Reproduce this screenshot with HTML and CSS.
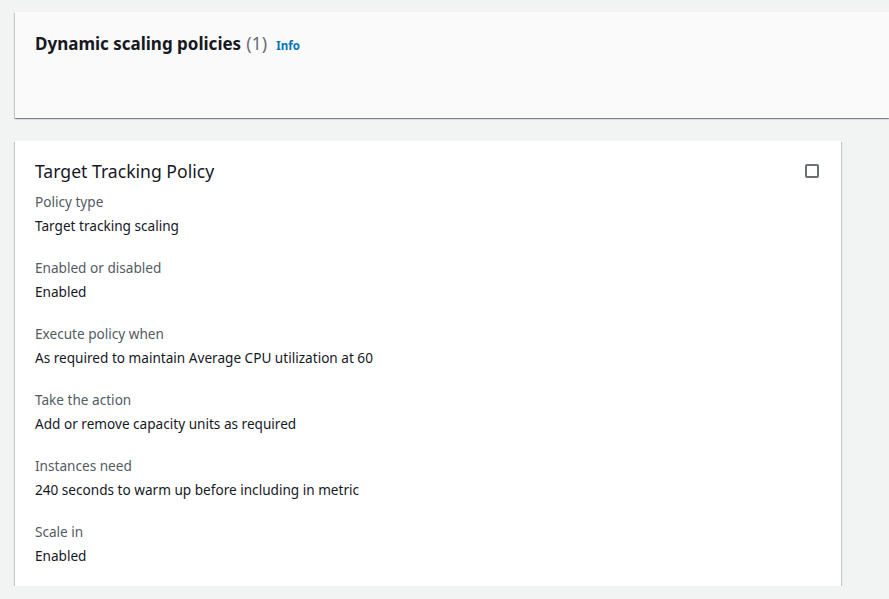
FILE: index.html
```html
<!DOCTYPE html>
<html>
<head>
<meta charset="utf-8">
<link rel="stylesheet" href="styles.css">
</head>
<body>
<div class="page">
  <section class="card card-top">
    <h2 class="heading">Dynamic scaling policies <span class="count">(1)</span> <a class="info" href="#">Info</a></h2>
  </section>
  <section class="card card-policy">
    <div class="policy-head">
      <h3 class="policy-title">Target Tracking Policy</h3>
      <span class="checkbox"></span>
    </div>
    <dl class="fields">
      <div class="field"><dt>Policy type</dt><dd>Target tracking scaling</dd></div>
      <div class="field"><dt>Enabled or disabled</dt><dd>Enabled</dd></div>
      <div class="field"><dt>Execute policy when</dt><dd>As required to maintain Average CPU utilization at 60</dd></div>
      <div class="field"><dt>Take the action</dt><dd>Add or remove capacity units as required</dd></div>
      <div class="field"><dt>Instances need</dt><dd>240 seconds to warm up before including in metric</dd></div>
      <div class="field"><dt>Scale in</dt><dd>Enabled</dd></div>
    </dl>
  </section>
</div>
</body>
</html>
```
FILE: styles.css
```css
html, body {
  margin: 0;
  padding: 0;
  background: #f2f3f3;
  font-family: "Noto Sans", "Open Sans", sans-serif;
  color: #16191f;
}
.page {
  padding: 12px 0 0 15px;
  display: flex;
  flex-direction: column;
  gap: 23px;
}
.card {
  box-shadow: 0 1px 1px 0 rgba(0,28,36,.3), 1px 1px 1px 0 rgba(0,28,36,.15), -1px 1px 1px 0 rgba(0,28,36,.15);
}
.card-top {
  background: #fafafa;
  height: 106px;
  box-sizing: border-box;
  padding: 20px 20px 0;
}
.heading {
  margin: 0;
  font-size: 17px;
  line-height: 22px;
  font-weight: 700;
  display: flex;
  align-items: baseline;
}
.count {
  font-size: 18px;
  font-weight: 400;
  color: #687078;
  margin-left: 5px;
}
.info {
  font-size: 11.5px;
  font-weight: 700;
  color: #0073bb;
  text-decoration: none;
  margin-left: 9px;
}
.card-policy {
  background: #fff;
  width: 826px;
  box-sizing: border-box;
  padding: 19px 20px 19px;
}
.policy-head {
  display: flex;
  justify-content: space-between;
  align-items: center;
}
.policy-title {
  margin: 0;
  font-size: 17.6px;
  line-height: 22px;
  font-weight: 400;
}
.checkbox {
  width: 10px;
  height: 10px;
  border: 2px solid #687078;
  border-radius: 2px;
  margin-right: 2px;
}
.fields {
  margin: 9px 0 0;
  display: flex;
  flex-direction: column;
  gap: 20px;
}
.field {
  display: flex;
  flex-direction: column;
  gap: 2px;
}
.field dt {
  font-size: 13.6px;
  line-height: 22px;
  color: #545b64;
}
.field dd {
  margin: 0;
  font-size: 13.6px;
  line-height: 22px;
  color: #16191f;
}
```
